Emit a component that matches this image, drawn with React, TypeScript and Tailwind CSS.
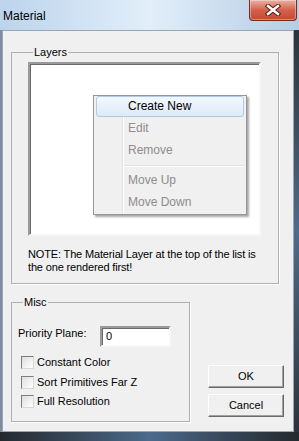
const sunken =
  "border-2 border-t-[#9a9a9a] border-l-[#9a9a9a] border-r-[#f7f7f7] border-b-[#f7f7f7] shadow-[inset_1px_1px_0_#6b6b6b]";

const raised =
  "border border-t-white border-l-white border-r-[#696969] border-b-[#696969] shadow-[inset_-1px_-1px_0_#a0a0a0]";

const MenuItem = ({ label, active, disabled }: { label: string; active?: boolean; disabled?: boolean }) => (
  <div className="relative h-[22px]">
    {active && (
      <div className="absolute inset-x-[2px] top-0 bottom-[1px] rounded-[3px] border border-[#b3cbe6] bg-gradient-to-b from-[#f3f8fd] to-[#deeaf8]" />
    )}
    <span
      className={
        "relative block pl-[34px] text-[12px] leading-[21px] " + (disabled ? "text-[#8d8d8d]" : "text-black")
      }
    >
      {label}
    </span>
  </div>
);

const Check = ({ label }: { label: string }) => (
  <label className="flex h-[13px] items-center gap-[3px] pl-[3px]">
    <span className="h-[13px] w-[13px] border border-t-[#7d7d7d] border-l-[#7d7d7d] border-r-[#d8d8d8] border-b-[#d8d8d8] bg-gradient-to-br from-[#dedede] to-white" />
    <span className="text-[11px] leading-[13px]">{label}</span>
  </label>
);

export default function App() {
  return (
    <div className="flex h-[441px] w-[299px] flex-col overflow-hidden bg-[#343a41] font-['Liberation_Sans',Arial,sans-serif] text-black">
      {/* title bar */}
      <div className="flex h-[30px] items-start bg-gradient-to-r from-[#bcd4ec] via-[#e2eef9] to-[#b6cde4] pl-[3px]">
        <span className="mt-[9px] text-[12px] leading-[15px]">Material</span>
        <div className="ml-auto mr-[2px] flex h-[21px] w-[48px] items-center justify-center rounded-b-[4px] border border-t-0 border-[#7a2a20] bg-gradient-to-b from-[#eab1a3] via-[#d4614c] to-[#c4492f] shadow-[inset_0_0_0_1px_rgba(255,255,255,0.35)]">
          <svg width="16" height="12" viewBox="0 0 16 12">
            <path d="M3 2 L13 10 M13 2 L3 10" stroke="#5a1a12" strokeWidth="4.5" strokeLinecap="square" />
            <path d="M3 2 L13 10 M13 2 L3 10" stroke="#ffffff" strokeWidth="2.5" strokeLinecap="square" />
          </svg>
        </div>
      </div>

      <div className="flex flex-1">
        <div className="w-[2px] bg-[#7d8d9e]" />
        {/* client area */}
        <div className="flex flex-1 flex-col border border-[#98a5b2] bg-[#f0f0f0]">
          <fieldset className="ml-[8px] mt-[15px] w-[268px] border border-[#b0b0b0] px-[16px] pb-[9px] pt-[3px] shadow-[1px_1px_0_#fff]">
            <legend className="ml-[5px] px-[1px] text-[11px] leading-[13px]">Layers</legend>
            <div className={"relative h-[174px] w-[233px] bg-white " + sunken}>
              {/* context menu */}
              <div className="absolute left-[63px] top-[31px] w-[154px] border border-[#979797] bg-[#f0f0f0] shadow-[2px_2px_2px_rgba(0,0,0,0.35)]">
                <div className="absolute bottom-0 left-[28px] top-0 w-[2px] border-l border-[#e2e3e3] border-r border-r-white" />
                <MenuItem label="Create New" active />
                <MenuItem label="Edit" disabled />
                <MenuItem label="Remove" disabled />
                <div className="flex h-[8px] items-center pl-[30px] pr-[2px]">
                  <div className="h-[2px] w-full border-t border-[#e0e0e0] border-b border-b-white" />
                </div>
                <MenuItem label="Move Up" disabled />
                <MenuItem label="Move Down" disabled />
              </div>
            </div>
            <p className="mt-[12px] whitespace-nowrap text-[11px] leading-[13px] tracking-[-0.15px]">
              NOTE: The Material Layer at the top of the list is
              <br />
              the one rendered first!
            </p>
          </fieldset>

          <div className="ml-[8px] mt-[12px] flex items-end">
            <fieldset className="w-[179px] border border-[#b0b0b0] pb-[13px] pl-[6px] pt-[17px] shadow-[1px_1px_0_#fff]">
              <legend className="ml-[5px] px-[1px] text-[11px] leading-[13px]">Misc</legend>
              <div className="flex items-start">
                <span className="mt-[1px] w-[82px] text-[11px] leading-[13px]">Priority Plane:</span>
                <div className={"h-[21px] w-[71px] bg-white pl-[4px] text-[11px] leading-[17px] " + sunken}>0</div>
              </div>
              <div className="mt-[9px] flex flex-col gap-[6.5px]">
                <Check label="Constant Color" />
                <Check label="Sort Primitives Far Z" />
                <Check label="Full Resolution" />
              </div>
            </fieldset>
            <div className="mb-[5px] ml-[18px] flex flex-col gap-[6px]">
              <button className={"h-[23px] w-[76px] bg-[#f0f0f0] text-[11px] " + raised}>OK</button>
              <button className={"h-[23px] w-[76px] bg-[#f0f0f0] text-[11px] " + raised}>Cancel</button>
            </div>
          </div>
        </div>
        <div className="w-[5px] bg-gradient-to-b from-[#2e3339] via-[#4f6c8c] to-[#2e3339]" />
      </div>
      <div className="h-[9px] bg-gradient-to-r from-[#25292e] via-[#4b6a8c] to-[#25292e]" />
    </div>
  );
}
